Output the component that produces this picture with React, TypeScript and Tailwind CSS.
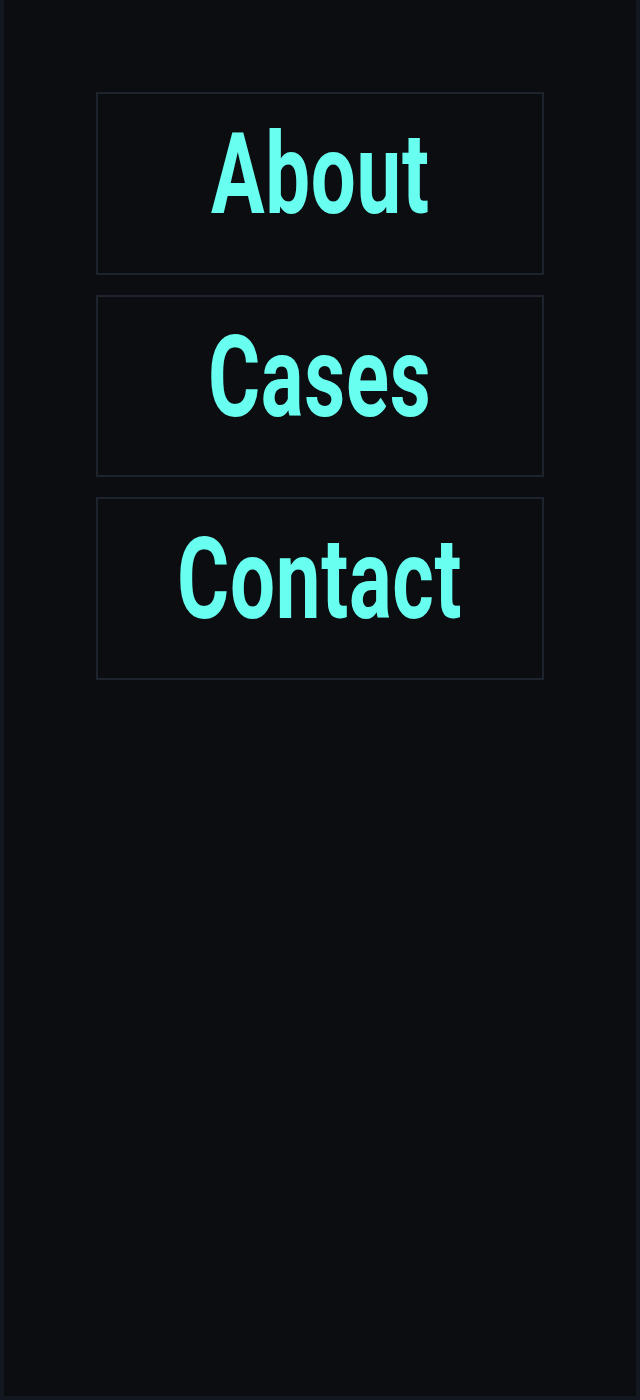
const items = ["About", "Cases", "Contact"];

export default function App() {
  return (
    <div className="min-h-[1400px] w-full bg-[#0b0d11] border-x-4 border-b-4 border-[#13171f] pt-[92px]">
      <nav className="mx-auto flex w-[448px] flex-col gap-5">
        {items.map((item) => (
          <a
            key={item}
            href="#"
            className="flex h-[182.5px] items-center justify-center border-2 border-[#1e242e] pb-[18px]"
          >
            <span
              className="inline-block scale-x-[0.7] text-[114px] leading-none font-bold tracking-[1px] text-[#68fff0]"
              style={{ fontFamily: "Roboto, 'Liberation Sans', sans-serif" }}
            >
              {item}
            </span>
          </a>
        ))}
      </nav>
    </div>
  );
}
